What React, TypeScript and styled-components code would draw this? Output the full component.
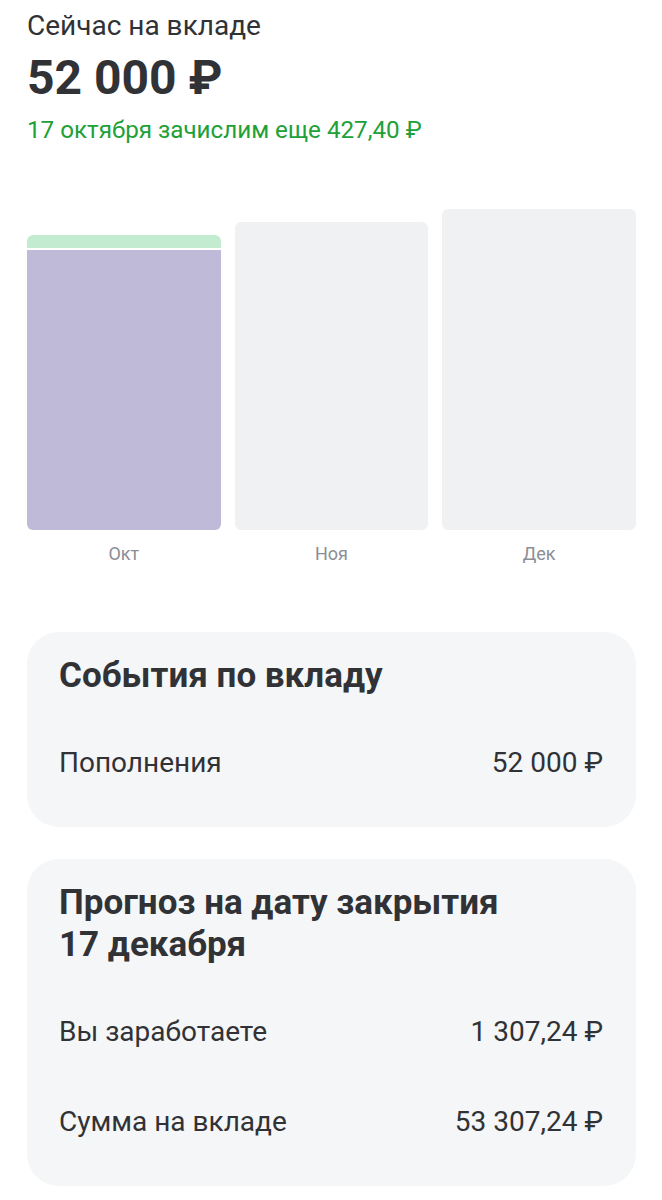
import React from "react";
import styled, { createGlobalStyle } from "styled-components";

const GlobalStyle = createGlobalStyle`
  html, body {
    margin: 0;
    padding: 0;
    background: #ffffff;
  }
  body {
    font-family: Roboto, "Noto Sans", "Liberation Sans", sans-serif;
    color: #313236;
    -webkit-font-smoothing: antialiased;
  }
`;

const Page = styled.main`
  width: 662px;
  box-sizing: border-box;
  padding: 8px 26px 40px 27px;
  display: flex;
  flex-direction: column;
`;

const Caption = styled.div`
  font-size: 28px;
  line-height: 36px;
  color: #313236;
`;

const Balance = styled.div`
  margin-top: 6px;
  font-size: 48px;
  line-height: 56px;
  font-weight: 700;
  color: #313236;
`;

const Accrual = styled.div`
  margin-top: 8px;
  font-size: 24.2px;
  line-height: 32px;
  color: #21a038;
`;

const Chart = styled.div`
  margin-top: 63px;
  display: grid;
  grid-template-columns: repeat(3, 1fr);
  column-gap: 14px;
`;

const Column = styled.div`
  display: flex;
  flex-direction: column;
  align-items: stretch;
`;

const BarArea = styled.div`
  height: 321px;
  display: flex;
  flex-direction: column;
  justify-content: flex-end;
`;

const Bar = styled.div<{ $empty?: boolean }>`
  display: flex;
  flex-direction: column;
  gap: 2px;
  border-radius: 6px;
  overflow: hidden;
  background: ${(p) => (p.$empty ? "#f0f1f3" : "#ffffff")};
`;

const Segment = styled.div<{ $color: string }>`
  background: ${(p) => p.$color};
`;

const MonthLabel = styled.div`
  margin-top: 12px;
  text-align: center;
  font-size: 18px;
  line-height: 24px;
  color: #8b8e95;
`;

const Cards = styled.div`
  margin-top: 66px;
  display: flex;
  flex-direction: column;
  gap: 32px;
`;

const Card = styled.section`
  background: #f5f6f8;
  border-radius: 32px;
  padding: 23px 33px 19px 32px;
  display: flex;
  flex-direction: column;
`;

const CardTitle = styled.h2`
  margin: 0 0 21px 0;
  font-size: 35px;
  line-height: 42px;
  font-weight: 700;
  color: #313236;
`;

const Row = styled.div`
  height: 90px;
  display: flex;
  align-items: center;
  justify-content: space-between;
  font-size: 28px;
  line-height: 36px;
  color: #313236;
`;

const months = [
  { name: "Окт", height: 295, segments: [{ h: 13, c: "#c2ebd0" }, { h: 280, c: "#c0bad9" }] },
  { name: "Ноя", height: 308, segments: [] as { h: number; c: string }[] },
  { name: "Дек", height: 321, segments: [] as { h: number; c: string }[] },
];

export default function App() {
  return (
    <>
      <GlobalStyle />
      <Page>
        <Caption>Сейчас на вкладе</Caption>
        <Balance>52 000 ₽</Balance>
        <Accrual>17 октября зачислим еще 427,40 ₽</Accrual>

        <Chart>
          {months.map((m) => (
            <Column key={m.name}>
              <BarArea>
                <Bar $empty={m.segments.length === 0} style={{ height: m.height }}>
                  {m.segments.map((s, i) => (
                    <Segment key={i} $color={s.c} style={{ height: s.h, flexGrow: i === m.segments.length - 1 ? 1 : 0 }} />
                  ))}
                </Bar>
              </BarArea>
              <MonthLabel>{m.name}</MonthLabel>
            </Column>
          ))}
        </Chart>

        <Cards>
          <Card>
            <CardTitle>События по вкладу</CardTitle>
            <Row>
              <span>Пополнения</span>
              <span>52 000 ₽</span>
            </Row>
          </Card>
          <Card>
            <CardTitle>
              Прогноз на дату закрытия
              <br />
              17 декабря
            </CardTitle>
            <Row>
              <span>Вы заработаете</span>
              <span>1 307,24 ₽</span>
            </Row>
            <Row>
              <span>Сумма на вкладе</span>
              <span>53 307,24 ₽</span>
            </Row>
          </Card>
        </Cards>
      </Page>
    </>
  );
}
